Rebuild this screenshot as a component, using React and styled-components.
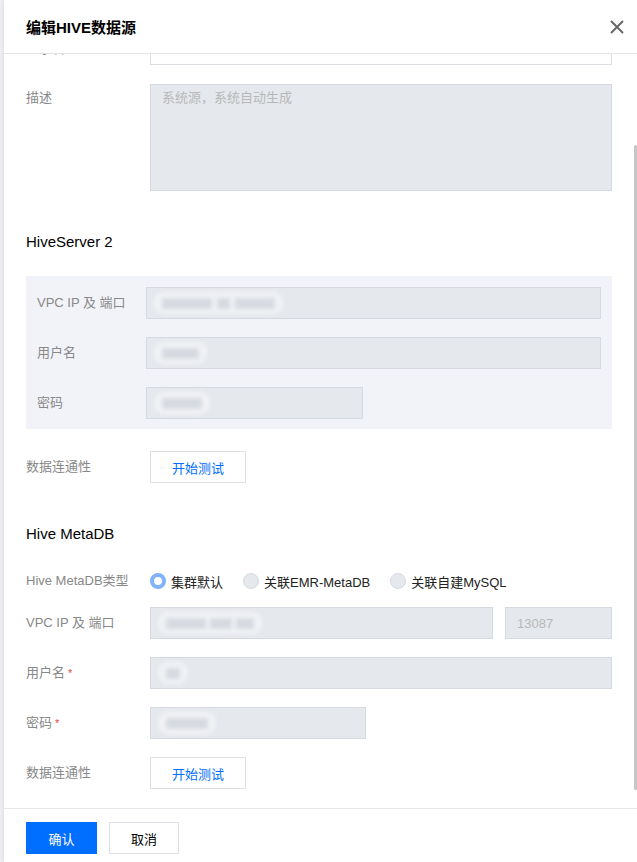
import React, { useLayoutEffect, useRef } from 'react';
import styled, { createGlobalStyle } from 'styled-components';

const GlobalStyle = createGlobalStyle`
  html, body {
    margin: 0;
    padding: 0;
  }
  body {
    background: #eff0f3;
    font-family: "Liberation Sans", Arial, "Noto Sans CJK SC", sans-serif;
    color: #000;
  }
`;

const Dialog = styled.div`
  background: #fff;
  box-shadow: -1px 0 4px rgba(0, 0, 0, 0.08);
  display: flex;
  flex-direction: column;
  height: 862px;
  margin-left: 4px;
  width: 633px;
`;

const Header = styled.div`
  align-items: center;
  border-bottom: 1px solid #e6e6e6;
  display: flex;
  flex-shrink: 0;
  height: 53px;
  justify-content: space-between;
  padding: 0 12px 0 22px;
`;

const Title = styled.h2`
  color: #000;
  font-size: 15px;
  font-weight: bold;
  margin: 0;
`;

const CloseButton = styled.button`
  background: none;
  border: 0;
  color: #666;
  cursor: pointer;
  display: flex;
  height: 16px;
  padding: 0;
  width: 16px;
`;

const BodyFrame = styled.div`
  flex: 1;
  min-height: 0;
  position: relative;
`;

const Body = styled.div`
  height: 100%;
  overflow-y: auto;
  scrollbar-width: none;
  &::-webkit-scrollbar {
    display: none;
  }
`;

const ScrollThumb = styled.div`
  background: #c6c6c6;
  border-radius: 2px;
  height: 645px;
  position: absolute;
  right: 0;
  top: 91px;
  width: 3px;
`;

const Content = styled.div`
  padding: 85px 25px 41px 22px;
`;

const Row = styled.div`
  align-items: ${p => (p.$top ? 'flex-start' : 'center')};
  display: flex;
  margin-bottom: ${p => (p.$mb === undefined ? 18 : p.$mb)}px;
  min-height: ${p => p.$h || 32}px;
`;

const Label = styled.div`
  color: #888;
  flex-shrink: 0;
  font-size: 13px;
  line-height: 20px;
  padding-top: ${p => (p.$top ? 4 : 0)}px;
  width: ${p => p.$w || 124}px;
`;

const Required = styled.span`
  color: #e54545;
  font-size: 11px;
  margin-left: 3px;
  vertical-align: top;
`;

const Field = styled.div`
  align-items: center;
  background: ${p => (p.$enabled ? '#fff' : '#e5e8ed')};
  border: 1px solid ${p => (p.$enabled ? '#dcdfe4' : '#d5dae0')};
  box-sizing: border-box;
  color: #b8b8b8;
  display: flex;
  flex: ${p => (p.$w ? 'none' : 1)};
  font-size: 13px;
  height: ${p => p.$h || 32}px;
  margin-left: ${p => p.$ml || 0}px;
  overflow: hidden;
  padding: 0 11px;
  width: ${p => (p.$w ? `${p.$w}px` : 'auto')};
`;

const TextArea = styled(Field)`
  align-items: flex-start;
  line-height: 20px;
  padding-top: 3px;
`;

const Smudge = styled.span`
  align-items: center;
  background: rgba(245, 246, 248, 0.75);
  border-radius: 10px;
  display: inline-flex;
  filter: blur(2px);
  gap: ${p => p.$gap || 0}px;
  height: 22px;
  margin-left: -4px;
  padding: 0 8px;
`;

const Bar = styled.span`
  background: #d6dae0;
  display: inline-block;
  height: 11px;
  width: ${p => p.$w}px;
`;

const SectionTitle = styled.h3`
  color: #000;
  font-size: 15px;
  font-weight: normal;
  line-height: 20px;
  margin: 41px 0 ${p => p.$mb}px;
`;

const Panel = styled.div`
  background: #f2f3f8;
  padding: 11px 11px 10px;
  & > div:last-child {
    margin-bottom: 0;
  }
`;

const TestButton = styled.button`
  background: #fff;
  border: 1px solid #dcdfe4;
  color: #006eff;
  cursor: pointer;
  font-family: inherit;
  font-size: 13px;
  height: 32px;
  padding: 0;
  width: 96px;
`;

const Spacer = styled.div`
  height: ${p => p.$h}px;
`;

const RadioGroup = styled.div`
  align-items: center;
  display: flex;
  gap: 20px;
`;

const RadioItem = styled.label`
  align-items: center;
  color: #222;
  display: flex;
  font-size: 13px;
`;

const RadioDot = styled.span`
  background: ${p => (p.$checked ? '#fff' : '#e5e8ed')};
  border: ${p => (p.$checked ? '4px solid #7fb3fa' : '1px solid #d5dae0')};
  border-radius: 50%;
  box-sizing: border-box;
  height: 16px;
  margin-right: 5px;
  width: 16px;
`;

const Footer = styled.div`
  border-top: 1px solid #e6e6e6;
  box-sizing: border-box;
  display: flex;
  flex-shrink: 0;
  gap: 12px;
  height: 54px;
  padding: 13px 22px 0;
`;

const Button = styled.button`
  background: ${p => (p.$primary ? '#006eff' : '#fff')};
  border: 1px solid ${p => (p.$primary ? '#006eff' : '#dcdfe4')};
  color: ${p => (p.$primary ? '#fff' : '#000')};
  cursor: pointer;
  font-family: inherit;
  font-size: 13px;
  height: 32px;
  padding: 0;
  width: ${p => p.$w}px;
`;

const CloseIcon = () => (
  <svg width="16" height="16" viewBox="0 0 16 16">
    <path d="M2 2 L14 14 M14 2 L2 14" stroke="currentColor" strokeWidth="1.9" fill="none" />
  </svg>
);

const radios = [
  { label: '集群默认', checked: true },
  { label: '关联EMR-MetaDB' },
  { label: '关联自建MySQL' }
];

export default function App() {
  const bodyRef = useRef(null);

  useLayoutEffect(() => {
    if (bodyRef.current) bodyRef.current.scrollTop = 106;
  }, []);

  return (
    <>
      <GlobalStyle />
      <Dialog>
        <Header>
          <Title>编辑HIVE数据源</Title>
          <CloseButton aria-label="关闭">
            <CloseIcon />
          </CloseButton>
        </Header>

        <BodyFrame>
          <Body ref={bodyRef}>
            <Content>
              <Row $mb={19}>
                <Label>显示名</Label>
                <Field $enabled />
              </Row>
              <Row $top $mb={0}>
                <Label $top>描述</Label>
                <TextArea $h={107}>系统源，系统自动生成</TextArea>
              </Row>

              <SectionTitle $mb={24}>HiveServer 2</SectionTitle>
              <Panel>
                <Row>
                  <Label $w={109}>VPC IP 及 端口</Label>
                  <Field>
                    <Smudge $gap={5}>
                      <Bar $w={50} />
                      <Bar $w={13} />
                      <Bar $w={40} />
                    </Smudge>
                  </Field>
                </Row>
                <Row>
                  <Label $w={109}>用户名</Label>
                  <Field>
                    <Smudge>
                      <Bar $w={37} />
                    </Smudge>
                  </Field>
                </Row>
                <Row>
                  <Label $w={109}>密码</Label>
                  <Field $w={217}>
                    <Smudge>
                      <Bar $w={40} />
                    </Smudge>
                  </Field>
                </Row>
              </Panel>

              <Spacer $h={22} />
              <Row $mb={0}>
                <Label>数据连通性</Label>
                <TestButton>开始测试</TestButton>
              </Row>

              <SectionTitle $mb={27}>Hive MetaDB</SectionTitle>
              <Row $h={20} $mb={16}>
                <Label>Hive MetaDB类型</Label>
                <RadioGroup>
                  {radios.map(r => (
                    <RadioItem key={r.label}>
                      <RadioDot $checked={r.checked} />
                      {r.label}
                    </RadioItem>
                  ))}
                </RadioGroup>
              </Row>
              <Row>
                <Label>VPC IP 及 端口</Label>
                <Field>
                  <Smudge $gap={4}>
                    <Bar $w={40} />
                    <Bar $w={22} />
                    <Bar $w={18} />
                  </Smudge>
                </Field>
                <Field $w={107} $ml={12}>13087</Field>
              </Row>
              <Row>
                <Label>
                  用户名<Required>*</Required>
                </Label>
                <Field>
                  <Smudge>
                    <Bar $w={14} />
                  </Smudge>
                </Field>
              </Row>
              <Row>
                <Label>
                  密码<Required>*</Required>
                </Label>
                <Field $w={216}>
                  <Smudge>
                    <Bar $w={42} />
                  </Smudge>
                </Field>
              </Row>
              <Row $mb={0}>
                <Label>数据连通性</Label>
                <TestButton>开始测试</TestButton>
              </Row>
            </Content>
          </Body>
          <ScrollThumb />
        </BodyFrame>

        <Footer>
          <Button $primary $w={71}>确认</Button>
          <Button $w={70}>取消</Button>
        </Footer>
      </Dialog>
    </>
  );
}
